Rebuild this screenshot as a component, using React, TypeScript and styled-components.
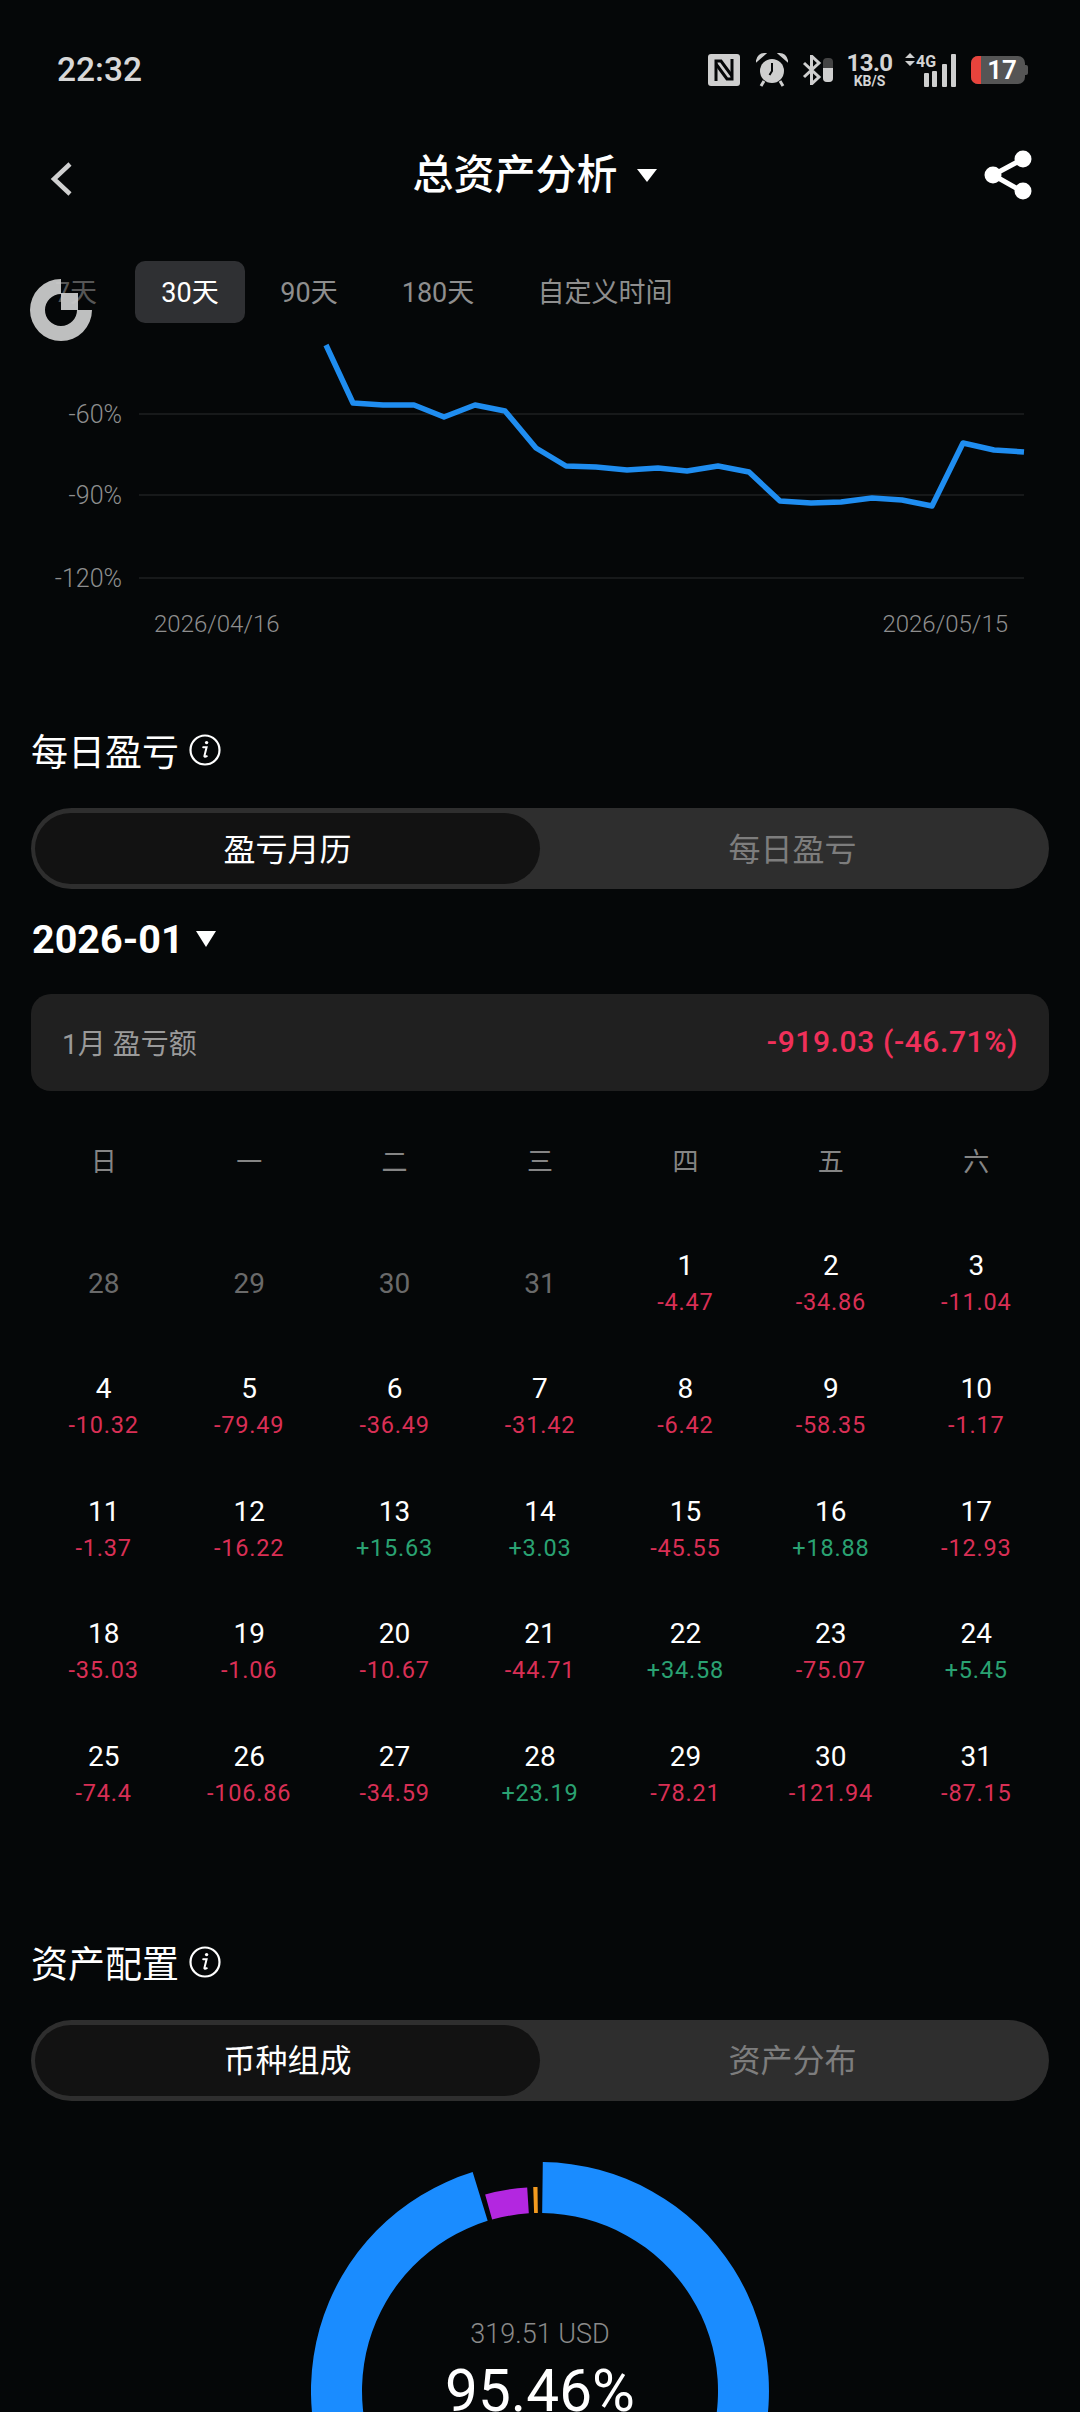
import React from 'react';
import styled, { createGlobalStyle } from 'styled-components';

const FONT = `Roboto, "Noto Sans CJK SC", sans-serif`;

const GlobalStyle = createGlobalStyle`
  html, body {
    margin: 0;
    padding: 0;
    background: #050708;
  }
  * {
    box-sizing: border-box;
  }
`;

const Page = styled.div`
  position: relative;
  width: 1080px;
  height: 2412px;
  overflow: hidden;
  background: #050708;
  color: #fff;
  font-family: ${FONT};
`;

const StatusBar = styled.div`
  height: 140px;
  padding: 52px 52px 0 57px;
  display: flex;
  justify-content: space-between;
  align-items: flex-start;
`;

const Time = styled.div`
  font-size: 33.5px;
  line-height: 36px;
  font-weight: 500;
  color: #d8d8d8;
`;

const StatusIcons = styled.div`
  display: flex;
  align-items: center;
  height: 36px;
`;

const NfcSvg = styled.svg`
  margin-right: 16px;
`;

const AlarmSvg = styled.svg`
  margin-right: 14px;
`;

const BluetoothSvg = styled.svg`
  margin-right: 14px;
`;

const NetSpeed = styled.div`
  margin-right: 13px;
  width: 45px;
  display: flex;
  flex-direction: column;
  align-items: center;
  color: #d4d4d4;
  font-weight: 700;
  .top {
    font-size: 24px;
    line-height: 22px;
    letter-spacing: -0.6px;
  }
  .unit {
    font-size: 14px;
    line-height: 14px;
  }
`;

const Net4G = styled.div`
  position: relative;
  width: 52px;
  height: 34px;
  margin-right: 14px;
  .label {
    position: absolute;
    left: 11px;
    top: 0;
    font-size: 16px;
    line-height: 17px;
    font-weight: 700;
    color: #d4d4d4;
  }
  svg {
    position: absolute;
    left: 0;
    top: 0;
  }
`;

const Battery = styled.div`
  position: relative;
  width: 54px;
  height: 28px;
  border-radius: 7px;
  overflow: hidden;
  background: #555;
  display: flex;
  align-items: center;
  justify-content: center;
  padding-left: 8px;
  font-size: 26px;
  font-weight: 600;
  color: #fff;
  .level {
    position: absolute;
    left: 0;
    top: 0;
    bottom: 0;
    width: 10px;
    background: #e8433c;
  }
`;

const BatteryNub = styled.div`
  width: 3px;
  height: 10px;
  border-radius: 0 2px 2px 0;
  background: #555;
`;

const Header = styled.div`
  height: 70px;
  padding: 0 48px 0 50px;
  display: flex;
  align-items: center;
  justify-content: space-between;
`;

const BackIcon = styled.svg`
  margin-top: 7px;
`;

const TitleWrap = styled.div`
  display: flex;
  align-items: center;
  gap: 19px;
  margin-left: 11px;
  font-size: 41px;
  font-weight: 500;
  line-height: 70px;
`;

const Caret = styled.span<{ $w: number; $h: number }>`
  display: inline-block;
  width: 0;
  height: 0;
  border-left: ${(p) => p.$w / 2}px solid transparent;
  border-right: ${(p) => p.$w / 2}px solid transparent;
  border-top: ${(p) => p.$h}px solid #fff;
`;

const RangeTabs = styled.div`
  margin-top: 51px;
  padding-left: 17px;
  display: flex;
  align-items: center;
  height: 62px;
`;

const RangeTab = styled.div<{ $active?: boolean; $w: number; $muted?: boolean }>`
  height: 62px;
  width: ${(p) => p.$w}px;
  padding-bottom: 3px;
  display: flex;
  align-items: center;
  justify-content: center;
  font-size: 27px;
  border-radius: 10px;
  background: ${(p) => (p.$active ? '#2f3033' : 'transparent')};
  color: ${(p) => (p.$active ? '#fff' : p.$muted ? '#565656' : '#8e8e8e')};
`;

const Logo = styled.svg`
  position: absolute;
  left: 30px;
  top: 279px;
  opacity: 0.93;
`;

const Chart = styled.svg`
  display: block;
  width: 1080px;
  height: 337px;
`;

const SectionTitle = styled.div<{ $top: number }>`
  margin-top: ${(p) => p.$top}px;
  padding-left: 31px;
  height: 50px;
  display: flex;
  align-items: center;
  gap: 10px;
  font-size: 37px;
  font-weight: 400;
`;

const Segment = styled.div`
  margin: 33px 31px 0;
  height: 81px;
  border-radius: 41px;
  background: #2e2e2e;
  display: flex;
  padding: 5px 0 5px 4px;
`;

const SegmentItem = styled.div<{ $active?: boolean }>`
  flex: ${(p) => (p.$active ? '0 0 505px' : '1 1 auto')};
  padding-bottom: 4px;
  padding-right: ${(p) => (p.$active ? 0 : 4)}px;
  border-radius: 36px;
  display: flex;
  align-items: center;
  justify-content: center;
  font-size: 32px;
  background: ${(p) => (p.$active ? '#121212' : 'transparent')};
  color: ${(p) => (p.$active ? '#fff' : '#7d7d7d')};
`;

const MonthPicker = styled.div`
  margin-top: 25px;
  padding-left: 32px;
  height: 50px;
  display: flex;
  align-items: center;
  gap: 12px;
  font-size: 39.5px;
  font-weight: 700;
`;

const SummaryCard = styled.div`
  margin: 30px 31px 0;
  height: 97px;
  padding: 0 31px 2px;
  border-radius: 20px;
  background: #202020;
  display: flex;
  align-items: center;
  justify-content: space-between;
  .label {
    font-size: 28px;
    color: #9a9a9a;
  }
  .value {
    font-size: 30px;
    letter-spacing: 0.6px;
    font-weight: 500;
    color: #f0305a;
  }
`;

const Calendar = styled.div`
  margin: 48px 31px 0;
  display: grid;
  grid-template-columns: repeat(7, 1fr);
  row-gap: 50.7px;
`;

const Weekday = styled.div`
  height: 40px;
  margin-bottom: 18.5px;
  display: flex;
  align-items: center;
  justify-content: center;
  font-size: 26px;
  color: #858585;
`;

const DayCell = styled.div`
  height: 72px;
  display: flex;
  flex-direction: column;
  align-items: center;
  justify-content: center;
`;

const DayNum = styled.div<{ $dim?: boolean }>`
  font-size: 28px;
  line-height: 36px;
  color: ${(p) => (p.$dim ? '#6a6a6a' : '#fff')};
`;

const DayValue = styled.div<{ $up: boolean }>`
  font-size: 23.5px;
  line-height: 36px;
  letter-spacing: 0.8px;
  font-weight: 400;
  color: ${(p) => (p.$up ? '#2aa272' : '#d92f55')};
`;

const DonutWrap = styled.div`
  position: relative;
  flex: 1;
  margin-top: 61px;
  height: 250px;
  display: flex;
  justify-content: center;
`;

const DonutSvg = styled.svg`
  flex-shrink: 0;
`;

const DonutCenter = styled.div`
  position: absolute;
  left: 0;
  right: 0;
  top: 155px;
  display: flex;
  flex-direction: column;
  align-items: center;
  .amount {
    font-size: 27px;
    line-height: 34px;
    font-weight: 300;
    color: #8a8a8a;
  }
  .pct {
    margin-top: 5px;
    font-size: 58.5px;
    line-height: 70px;
    font-weight: 400;
    color: #fff;
  }
`;

const LINE: [number, number][] = [
  [326, 345], [353, 403], [383, 405], [414, 405], [444, 417], [475, 405], [505, 411], [536, 448],
  [566, 466], [596, 467], [627, 470], [658, 468], [687, 471], [718, 466], [749, 472], [780, 501],
  [811, 503], [841, 502], [872, 498], [902, 500], [932, 506], [963, 443], [994, 450], [1024, 452],
];

const GRID = [
  { y: 414, label: '-60%' },
  { y: 495, label: '-90%' },
  { y: 578, label: '-120%' },
];

const WEEK = ['日', '一', '二', '三', '四', '五', '六'];

const DAYS: [number, string][] = [
  [1, '-4.47'], [2, '-34.86'], [3, '-11.04'], [4, '-10.32'], [5, '-79.49'], [6, '-36.49'], [7, '-31.42'],
  [8, '-6.42'], [9, '-58.35'], [10, '-1.17'], [11, '-1.37'], [12, '-16.22'], [13, '+15.63'], [14, '+3.03'],
  [15, '-45.55'], [16, '+18.88'], [17, '-12.93'], [18, '-35.03'], [19, '-1.06'], [20, '-10.67'], [21, '-44.71'],
  [22, '+34.58'], [23, '-75.07'], [24, '+5.45'], [25, '-74.4'], [26, '-106.86'], [27, '-34.59'], [28, '+23.19'],
  [29, '-78.21'], [30, '-121.94'], [31, '-87.15'],
];

// ring segment, angles in degrees clockwise from 12 o'clock
const arc = (a0: number, a1: number, r0: number, r1: number, cx = 229, cy = 229) => {
  const pt = (a: number, r: number) => {
    const t = (a * Math.PI) / 180;
    return `${(cx + r * Math.sin(t)).toFixed(2)} ${(cy - r * Math.cos(t)).toFixed(2)}`;
  };
  const large = a1 - a0 > 180 ? 1 : 0;
  return `M${pt(a0, r1)} A${r1} ${r1} 0 ${large} 1 ${pt(a1, r1)} L${pt(a1, r0)} A${r0} ${r0} 0 ${large} 0 ${pt(a0, r0)} Z`;
};

const InfoIcon = () => (
  <svg width="32" height="34" viewBox="0 0 32 34" fill="none">
    <circle cx="16" cy="17" r="14.5" stroke="#fff" strokeWidth="2.2" />
    <circle cx="17.6" cy="9.6" r="1.7" fill="#fff" />
    <path d="M14.2 14.2h3.4l-2.2 8.8c-.2.9.8 1.1 2.4.2" stroke="#fff" strokeWidth="2" strokeLinecap="round" />
  </svg>
);

const NfcIcon = () => (
  <NfcSvg width="32" height="32" viewBox="0 0 32 32">
    <rect width="32" height="32" rx="3" fill="#cfcfcf" />
    <path d="M8 27V7h5l11 15" fill="none" stroke="#050708" strokeWidth="3" />
    <path d="M24 5v20h-5L8 10" fill="none" stroke="#050708" strokeWidth="3" />
  </NfcSvg>
);

const AlarmIcon = () => (
  <AlarmSvg width="32" height="34" viewBox="0 0 32 34">
    <circle cx="16" cy="18" r="12" fill="#cfcfcf" />
    <path d="M16 10v8l-2.5 4" fill="none" stroke="#050708" strokeWidth="2" />
    <path d="M1 7.5C2 3.5 5 1 8.5 1L1 7.5zM31 7.5C30 3.5 27 1 23.5 1l7.5 6.5z" fill="#cfcfcf" stroke="#cfcfcf" strokeWidth="2" />
    <path d="M8 28l-3 5M24 28l3 5" stroke="#cfcfcf" strokeWidth="3" />
  </AlarmSvg>
);

const BluetoothIcon = () => (
  <BluetoothSvg width="31" height="30" viewBox="0 0 31 30">
    <path d="M2 8l15 14-7.5 7V1L17 8 2 22" fill="none" stroke="#cfcfcf" strokeWidth="3" />
    <rect x="21" y="3" width="10" height="24" rx="4" fill="#444" />
    <path d="M21 13h10v10a4 4 0 0 1-4 4h-2a4 4 0 0 1-4-4z" fill="#cfcfcf" />
  </BluetoothSvg>
);

const chartLabel = {
  fontSize: 25,
  fontWeight: 300,
  fill: '#8e8e8e',
  fontFamily: 'Roboto, sans-serif',
};

export default function App() {
  return (
    <Page>
      <GlobalStyle />
      <StatusBar>
        <Time>22:32</Time>
        <StatusIcons>
          <NfcIcon />
          <AlarmIcon />
          <BluetoothIcon />
          <NetSpeed>
            <span className="top">13.0</span>
            <span className="unit">KB/S</span>
          </NetSpeed>
          <Net4G>
            <svg width="52" height="34" viewBox="0 0 52 34">
              <path d="M0 5l5-5 5 5zM0 8h10l-5 5z" fill="#cfcfcf" />
              <rect x="19" y="20" width="5" height="14" rx="1" fill="#cfcfcf" />
              <rect x="27" y="18" width="5" height="16" rx="1" fill="#cfcfcf" />
              <rect x="37" y="11" width="5" height="23" rx="1" fill="#cfcfcf" />
              <rect x="46" y="1" width="5" height="33" rx="1" fill="#cfcfcf" />
            </svg>
            <span className="label">4G</span>
          </Net4G>
          <Battery>
            <span className="level" />
            17
          </Battery>
          <BatteryNub />
        </StatusIcons>
      </StatusBar>

      <Header>
        <BackIcon width="24" height="34" viewBox="0 0 24 34" fill="none">
          <path d="M20 2L4 17l16 15" stroke="#d0d0d0" strokeWidth="4.5" />
        </BackIcon>
        <TitleWrap>
          总资产分析
          <Caret $w={20} $h={13} />
        </TitleWrap>
        <svg width="48" height="50" viewBox="0 0 48 50">
          <path d="M39 9L9 25l30 17" fill="none" stroke="#fff" strokeWidth="5" />
          <circle cx="39" cy="9" r="8.5" fill="#fff" />
          <circle cx="9" cy="25" r="8.5" fill="#fff" />
          <circle cx="39" cy="41" r="8.5" fill="#fff" />
        </svg>
      </Header>

      <RangeTabs>
        <RangeTab $w={118} $muted>7天</RangeTab>
        <RangeTab $w={110} $active>30天</RangeTab>
        <RangeTab $w={128}>90天</RangeTab>
        <RangeTab $w={130}>180天</RangeTab>
        <RangeTab $w={204}>自定义时间</RangeTab>
      </RangeTabs>
      <Logo width="62" height="62" viewBox="0 0 62 62">
        <path d="M31 0A31 31 0 1 0 62 31H47A16 16 0 1 1 31 15Z" fill="#cdcdcd" />
        <rect x="31" y="14" width="17" height="17" fill="#cdcdcd" />
      </Logo>

      <Chart viewBox="0 323 1080 337">
        {GRID.map((g) => (
          <g key={g.y}>
            <line x1="139" x2="1024" y1={g.y} y2={g.y} stroke="#1e2021" strokeWidth="1.5" />
            <text x="122" y={g.y + 9} textAnchor="end" {...chartLabel}>
              {g.label}
            </text>
          </g>
        ))}
        <polyline
          points={LINE.map((p) => p.join(',')).join(' ')}
          fill="none"
          stroke="#1f8df0"
          strokeWidth="5.5"
          strokeLinejoin="round"
        />
        <text x="154" y="632" {...chartLabel} fontSize={24}>2026/04/16</text>
        <text x="1008" y="632" textAnchor="end" {...chartLabel} fontSize={24}>2026/05/15</text>
      </Chart>

      <SectionTitle $top={65}>
        每日盈亏
        <InfoIcon />
      </SectionTitle>
      <Segment>
        <SegmentItem $active>盈亏月历</SegmentItem>
        <SegmentItem>每日盈亏</SegmentItem>
      </Segment>

      <MonthPicker>
        2026-01
        <Caret $w={20} $h={16} />
      </MonthPicker>

      <SummaryCard>
        <span className="label">1月 盈亏额</span>
        <span className="value">-919.03 (-46.71%)</span>
      </SummaryCard>

      <Calendar>
        {WEEK.map((w) => (
          <Weekday key={w}>{w}</Weekday>
        ))}
        {[28, 29, 30, 31].map((d) => (
          <DayCell key={`prev-${d}`}>
            <DayNum $dim>{d}</DayNum>
          </DayCell>
        ))}
        {DAYS.map(([d, v]) => (
          <DayCell key={d}>
            <DayNum>{d}</DayNum>
            <DayValue $up={v.startsWith('+')}>{v}</DayValue>
          </DayCell>
        ))}
      </Calendar>

      <SectionTitle $top={126}>
        资产配置
        <InfoIcon />
      </SectionTitle>
      <Segment>
        <SegmentItem $active>币种组成</SegmentItem>
        <SegmentItem>资产分布</SegmentItem>
      </Segment>

      <DonutWrap>
        <DonutSvg width="458" height="458" viewBox="0 0 458 458">
          <path d={arc(0.7, 342.9, 178, 229)} fill="#1a8cff" />
          <path d={arc(344.4, 356.4, 178, 204)} fill="#b327e0" />
          <path d={arc(358.1, 359.3, 178, 204)} fill="#f39a1f" />
        </DonutSvg>
        <DonutCenter>
          <span className="amount">319.51 USD</span>
          <span className="pct">95.46%</span>
        </DonutCenter>
      </DonutWrap>
    </Page>
  );
}
